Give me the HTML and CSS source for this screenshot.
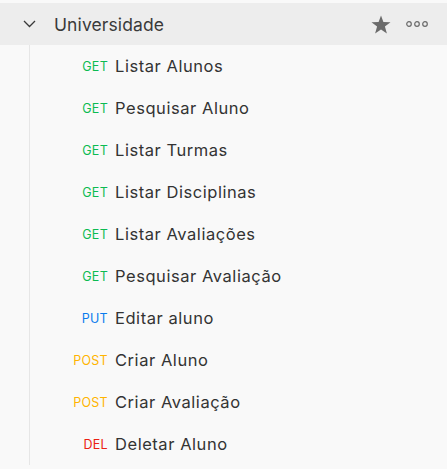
FILE: index.html
```html
<!DOCTYPE html>
<html lang="pt">
<head>
<meta charset="utf-8">
<link rel="stylesheet" href="styles.css">
</head>
<body>
<div class="sidebar">
  <div class="folder">
    <span class="chev"><svg width="13" height="8" viewBox="0 0 13 8"><path d="M1 1 L6.5 6.5 L12 1" fill="none" stroke="#3a3a3a" stroke-width="1.3"/></svg></span>
    <span class="folder-name">Universidade</span>
    <span class="actions">
      <svg class="star" width="20" height="19" viewBox="0 0 20 19"><path d="M10 0.5 L12.4 7 L19.5 7.2 L13.9 11.5 L15.9 18.5 L10 14.4 L4.1 18.5 L6.1 11.5 L0.5 7.2 L7.6 7 Z" fill="#6b6b6b"/></svg>
      <svg class="dots" width="22" height="6" viewBox="0 0 22 6"><circle cx="3" cy="3" r="2.3" fill="none" stroke="#6b6b6b" stroke-width="1.2"/><circle cx="11" cy="3" r="2.3" fill="none" stroke="#6b6b6b" stroke-width="1.2"/><circle cx="19" cy="3" r="2.3" fill="none" stroke="#6b6b6b" stroke-width="1.2"/></svg>
    </span>
  </div>
  <div class="children">
    <div class="req"><span class="method get">GET</span><span class="name">Listar Alunos</span></div>
    <div class="req"><span class="method get">GET</span><span class="name">Pesquisar Aluno</span></div>
    <div class="req"><span class="method get">GET</span><span class="name">Listar Turmas</span></div>
    <div class="req"><span class="method get">GET</span><span class="name">Listar Disciplinas</span></div>
    <div class="req"><span class="method get">GET</span><span class="name">Listar Avaliações</span></div>
    <div class="req"><span class="method get">GET</span><span class="name">Pesquisar Avaliação</span></div>
    <div class="req"><span class="method put">PUT</span><span class="name">Editar aluno</span></div>
    <div class="req"><span class="method post">POST</span><span class="name">Criar Aluno</span></div>
    <div class="req"><span class="method post">POST</span><span class="name">Criar Avaliação</span></div>
    <div class="req"><span class="method del">DEL</span><span class="name">Deletar Aluno</span></div>
  </div>
</div>
</body>
</html>
```
FILE: styles.css
```css
html, body {
  margin: 0;
  padding: 0;
  background: #f9f9f9;
  font-family: Inter, "Noto Sans", sans-serif;
}
.sidebar {
  padding-top: 3px;
}
.folder {
  height: 42px;
  background: #ededed;
  display: flex;
  align-items: center;
  padding-left: 23px;
  padding-right: 19px;
}
.chev {
  width: 13px;
  height: 8px;
  display: flex;
}
.folder-name {
  margin-left: 18px;
  font-size: 17.5px;
  letter-spacing: 0.1px;
  color: #3a3a3a;
  flex: 1;
}
.actions {
  display: flex;
  align-items: center;
  gap: 15px;
}
.children {
  margin-left: 29px;
  border-left: 1px solid #e6e6e6;
}
.req {
  height: 42px;
  display: flex;
  align-items: center;
  padding-left: 30px;
}
.method {
  width: 48px;
  text-align: right;
  font-size: 12.5px;
  letter-spacing: 0.3px;
  margin-right: 7px;
}
.name {
  font-size: 16.5px;
  letter-spacing: 0.55px;
  color: #333333;
}
.get { color: #0cbb52; }
.put { color: #097bed; }
.post { color: #ffb400; }
.del { color: #eb2013; }
```
